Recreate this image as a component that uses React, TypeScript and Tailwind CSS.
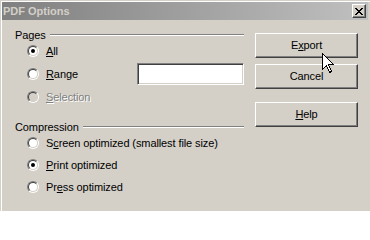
import React from 'react';

function Radio({ checked = false, disabled = false }: { checked?: boolean; disabled?: boolean }) {
  return (
    <span className="block w-[12px] h-[12px] shrink-0 rounded-full border border-t-[#808080] border-l-[#808080] border-r-white border-b-white">
      <span
        className={`flex w-full h-full items-center justify-center rounded-full border border-t-[#404040] border-l-[#404040] border-r-[#d4d0c8] border-b-[#d4d0c8] ${
          disabled ? 'bg-[#d4d0c8]' : 'bg-white'
        }`}
      >
        {checked && <span className="block w-[4px] h-[4px] rounded-full bg-black" />}
      </span>
    </span>
  );
}

function GroupHeader({ label }: { label: string }) {
  return (
    <div className="flex h-[10px] items-center">
      <span className="leading-[10px] whitespace-nowrap">{label}</span>
      <div className="ml-[4px] flex-1 h-[2px] border-t border-t-[#808080] border-b border-b-white" />
    </div>
  );
}

function OptionRow({
  children,
  checked,
  disabled,
  height = 'h-[22px]',
  extra,
}: {
  children: React.ReactNode;
  checked?: boolean;
  disabled?: boolean;
  height?: string;
  extra?: React.ReactNode;
}) {
  return (
    <div className={`flex items-center pl-[12px] ${height}`}>
      <Radio checked={checked} disabled={disabled} />
      <span
        className={`ml-[7px] leading-[13px] whitespace-nowrap ${
          disabled ? 'text-[#808080] [text-shadow:1px_1px_0_#ffffff]' : ''
        }`}
      >
        {children}
      </span>
      {extra}
    </div>
  );
}

function Button({ children, className = '' }: { children: React.ReactNode; className?: string }) {
  return (
    <div
      className={`flex h-[25px] w-[103px] items-center justify-center border border-t-white border-l-white border-r-[#404040] border-b-[#404040] shadow-[inset_-1px_-1px_0_#808080] ${className}`}
    >
      {children}
    </div>
  );
}

export default function App() {
  return (
    <div
      className="relative w-[370px] h-[211px] overflow-hidden bg-[#d4d0c8] pt-px pl-px text-[11px] tracking-[-0.1px] text-black"
      style={{ fontFamily: '"Liberation Sans", Arial, sans-serif' }}
    >
      <div className="h-full border-t border-l border-white">
        {/* Title bar */}
        <div className="flex h-[18px] w-[366px] items-center bg-gradient-to-r from-[#808080] to-[#c0c0c0] pl-px pr-[2px]">
          <span className="font-bold tracking-normal text-[#d4d0c8] leading-[13px]">PDF Options</span>
          <div className="ml-auto flex h-[14px] w-[14px] items-center justify-center border border-t-white border-l-white border-r-[#404040] border-b-[#404040] shadow-[inset_-1px_-1px_0_#808080] bg-[#d4d0c8]">
            <svg width="8" height="7" viewBox="0 0 8 7" shapeRendering="crispEdges">
              <path d="M0 0h2v1h-2zM6 0h2v1h-2zM1 1h2v1h-2zM5 1h2v1h-2zM2 2h4v1h-4zM3 3h2v1h-2zM2 4h4v1h-4zM1 5h2v1h-2zM5 5h2v1h-2zM0 6h2v1h-2zM6 6h2v1h-2z" fill="#000" />
            </svg>
          </div>
        </div>

        {/* Body */}
        <div className="flex">
          <div className="w-[242px] pl-[13px] pt-[10px]">
            <GroupHeader label="Pages" />
            <OptionRow checked>
              <span className="underline underline-offset-[1px]">A</span>ll
            </OptionRow>
            <OptionRow
              height="h-[24px]"
              extra={
                <div className="ml-auto h-[22px] w-[107px] border border-t-[#808080] border-l-[#808080] border-r-white border-b-white bg-white shadow-[inset_1px_1px_0_#404040,inset_-1px_-1px_0_#d4d0c8]" />
              }
            >
              <span className="underline underline-offset-[1px]">R</span>ange
            </OptionRow>
            <OptionRow disabled>
              <span className="underline underline-offset-[1px]">S</span>election
            </OptionRow>

            <div className="mt-[14px]">
              <GroupHeader label="Compression" />
            </div>
            <OptionRow>
              S<span className="underline underline-offset-[1px]">c</span>reen optimized (smallest file size)
            </OptionRow>
            <OptionRow checked>
              <span className="underline underline-offset-[1px]">P</span>rint optimized
            </OptionRow>
            <OptionRow>
              Pr<span className="underline underline-offset-[1px]">e</span>ss optimized
            </OptionRow>
          </div>

          <div className="ml-[11px] flex flex-col pt-[13px]">
            <Button>
              E<span className="underline underline-offset-[1px]">x</span>port
            </Button>
            <Button className="mt-[6px]">Cancel</Button>
            <Button className="mt-[13px]">
              <span className="underline underline-offset-[1px]">H</span>elp
            </Button>
          </div>
        </div>
      </div>

      {/* Mouse pointer over Export */}
      <svg
        className="absolute left-[322px] top-[53px]"
        width="13"
        height="21"
        viewBox="0 0 13 21"
        shapeRendering="crispEdges"
      >
        <path
          d="M0.5 0.5 L0.5 16.5 L4.5 12.5 L7.5 19.5 L9.5 18.5 L6.5 11.5 L11.5 11.5 Z"
          fill="#fff"
          stroke="#000"
          strokeWidth="1"
        />
      </svg>
    </div>
  );
}
